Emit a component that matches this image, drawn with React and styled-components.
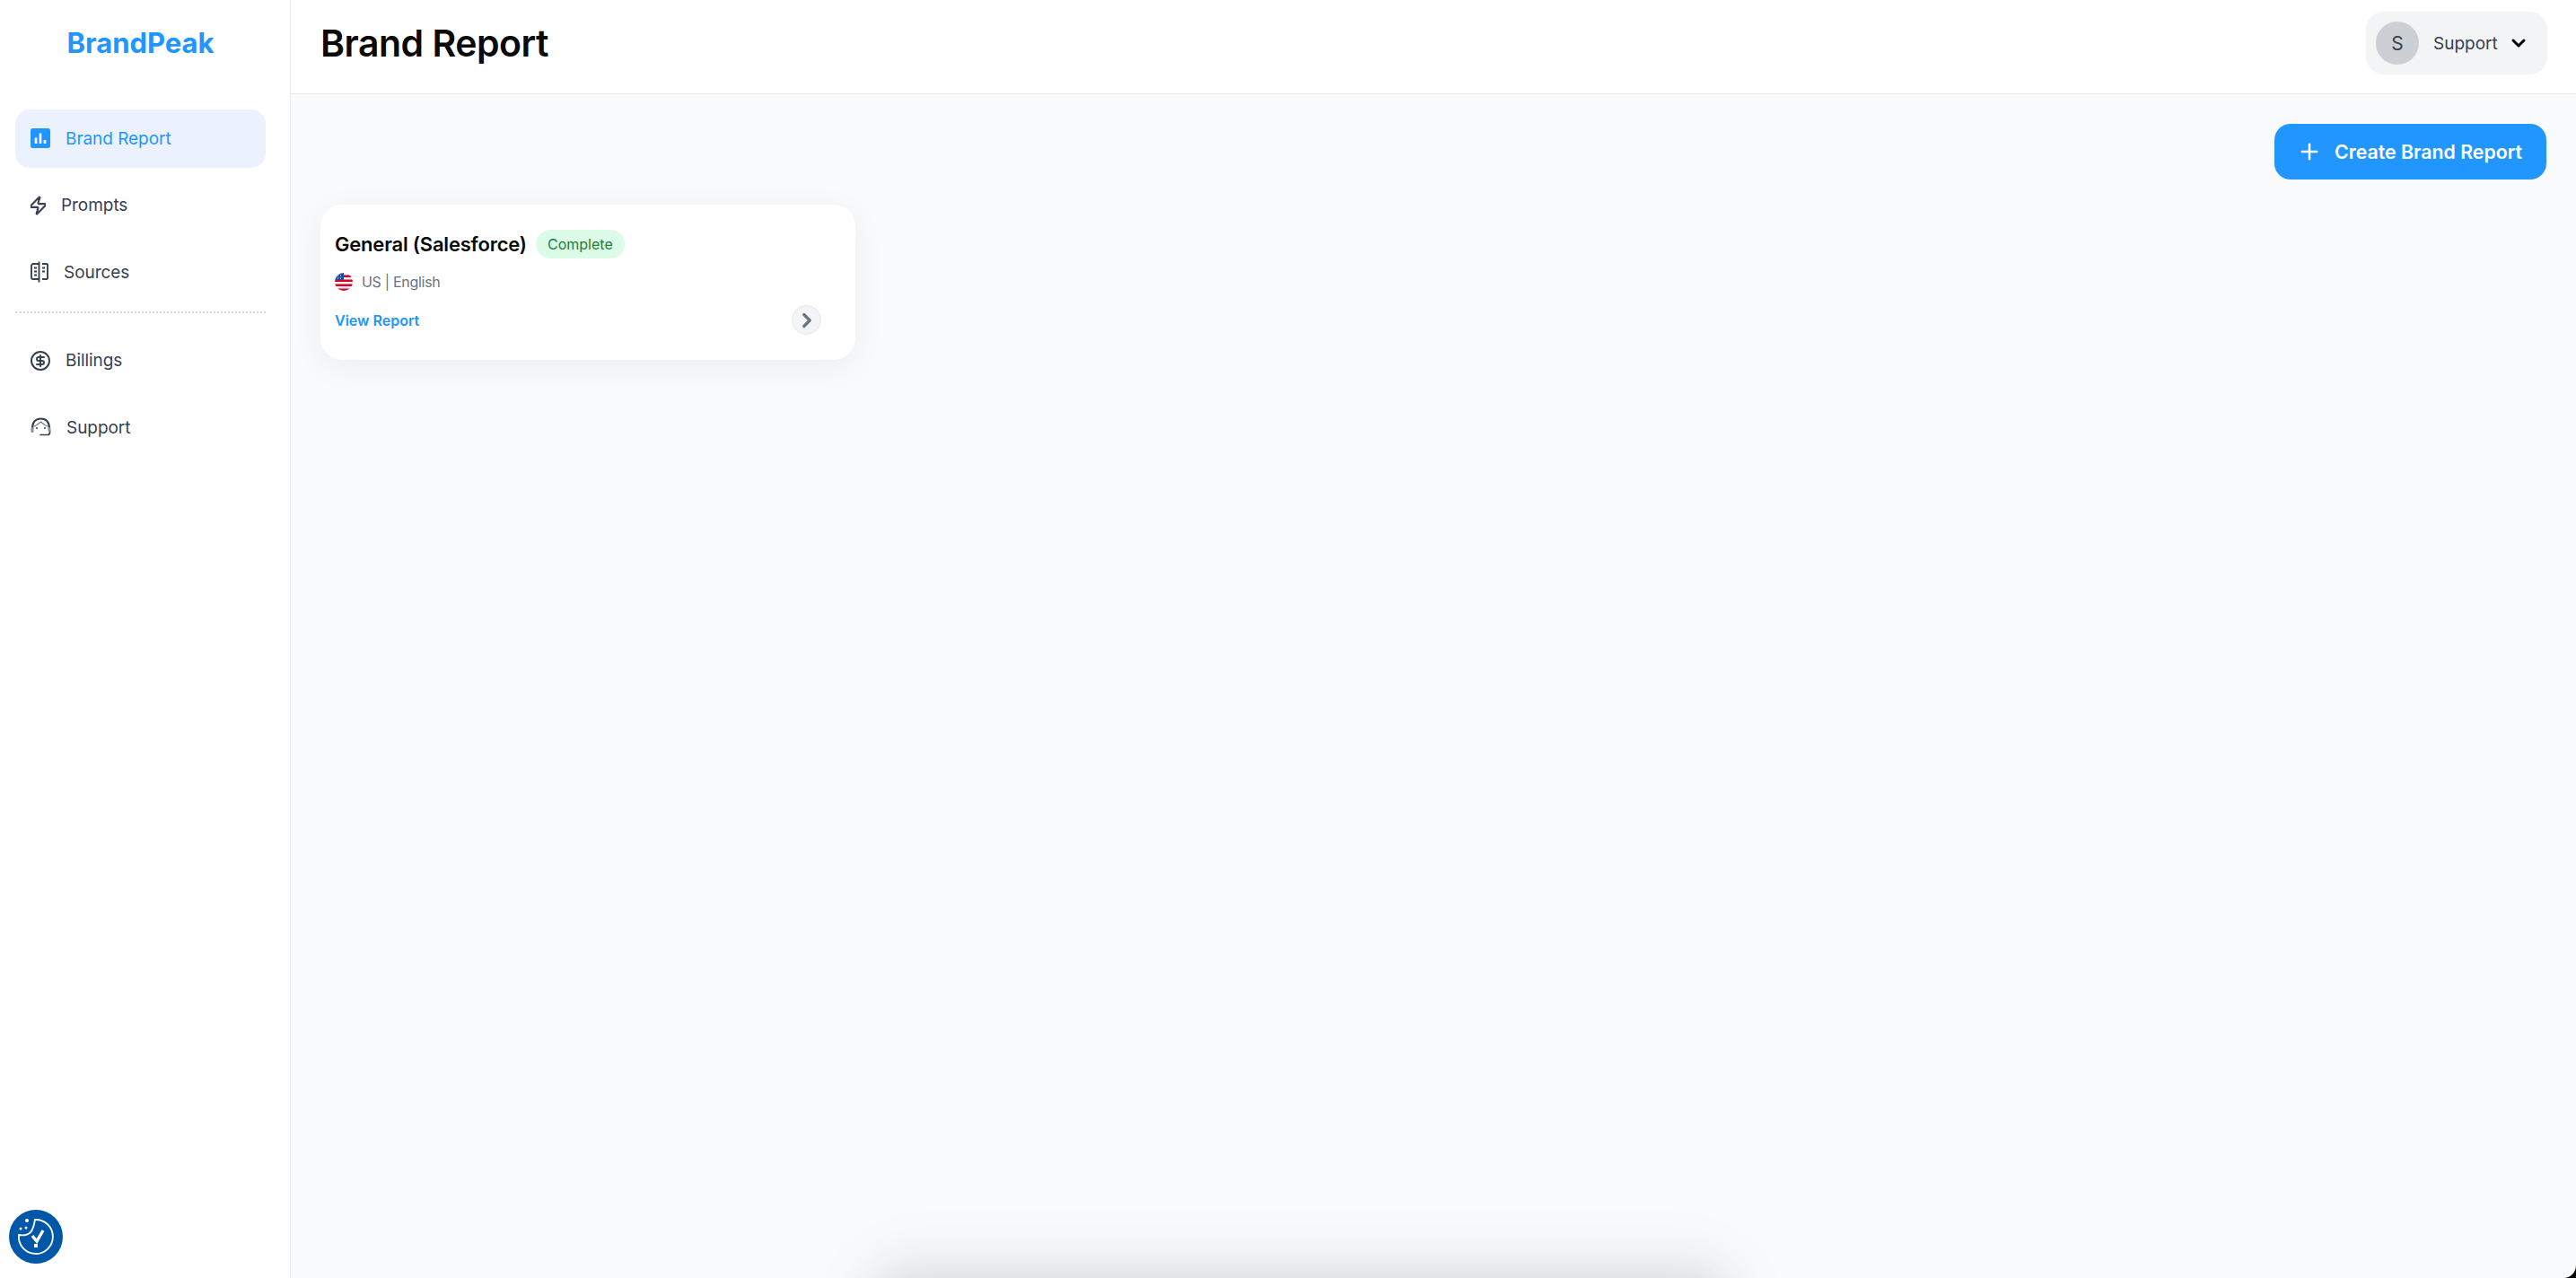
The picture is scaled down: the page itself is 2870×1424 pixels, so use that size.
import React from "react";
import styled, { createGlobalStyle } from "styled-components";
import { ChevronDown, ChevronRight, CircleDollarSign, Plus, Zap } from "lucide-react";

const GlobalStyle = createGlobalStyle`
	html, body {
		margin: 0;
		height: 100%;
		background: #000;
	}
	body {
		font-family: "Inter", "Liberation Sans", sans-serif;
		overflow: hidden;
	}
	#root {
		height: 100%;
	}
	* {
		box-sizing: border-box;
	}
`;

const Page = styled.div`
	height: 100vh;
	display: grid;
	grid-template-columns: 324px 1fr;
	background: #f9fafc;
	border-bottom-right-radius: 14px;
	overflow: hidden;
	position: relative;
`;

const Sidebar = styled.aside`
	background: #fff;
	border-right: 1px solid #e8eaee;
	padding: 0 27px 0 17px;
	display: flex;
	flex-direction: column;
`;

const Logo = styled.div`
	height: 94px;
	margin-bottom: 28px;
	display: flex;
	align-items: center;
	justify-content: center;
	color: #2196ff;
	font-size: 31px;
	font-weight: 700;
`;

const NavGroup = styled.nav`
	display: flex;
	flex-direction: column;
	gap: 10px;
`;

const NavItem = styled.a`
	height: 64.5px;
	padding-left: 17px;
	display: flex;
	align-items: center;
	gap: 17px;
	border-radius: 16px;
	font-size: 19px;
	font-weight: 400;
	letter-spacing: -0.05px;
	color: ${(p) => (p.$active ? "#2196ff" : "#374151")};
	background: ${(p) => (p.$active ? "#ebf2fd" : "transparent")};
`;

const Divider = styled.hr`
	width: 100%;
	margin: 11px 0 21px;
	border: 0;
	border-top: 2px dotted #d1d5db;
`;

const Main = styled.main`
	min-width: 0;
	display: flex;
	flex-direction: column;
	position: relative;
`;

const Header = styled.header`
	height: 105px;
	background: #fff;
	border-bottom: 1px solid #e6e8eb;
	padding: 0 32px 8px 33px;
	display: flex;
	align-items: center;
	justify-content: space-between;
`;

const Title = styled.h1`
	margin: 0;
	font-size: 41px;
	font-weight: 600;
	letter-spacing: -0.5px;
	color: #0a0a0a;
`;

const UserMenu = styled.div`
	width: 202px;
	height: 70px;
	padding: 0 20px 0 11px;
	display: flex;
	align-items: center;
	background: #f3f4f6;
	border-radius: 20px;
	color: #374151;
	font-size: 19px;
	font-weight: 400;
`;

const Avatar = styled.div`
	width: 48px;
	height: 48px;
	margin-right: 16px;
	border-radius: 50%;
	background: #ccd0d5;
	display: flex;
	align-items: center;
	justify-content: center;
	font-size: 21px;
	font-weight: 400;
`;

const UserName = styled.span`
	flex: 1;
`;

const Content = styled.div`
	padding: 33px 33px 0 33px;
	display: flex;
	flex-direction: column;
`;

const CreateButton = styled.button`
	align-self: flex-end;
	width: 303px;
	height: 62px;
	padding-right: 8px;
	border: 0;
	border-radius: 18px;
	background: #2196ff;
	color: #fff;
	display: flex;
	align-items: center;
	justify-content: center;
	gap: 14px;
	font-family: inherit;
	font-size: 21.3px;
	font-weight: 600;
`;

const Card = styled.section`
	width: 596px;
	height: 173px;
	margin-top: 28px;
	padding: 28px 38px 0 16px;
	background: #fff;
	border-radius: 24px;
	box-shadow: 0 8px 36px rgba(17, 24, 39, 0.05);
`;

const CardHead = styled.div`
	display: flex;
	align-items: center;
	gap: 10px;
`;

const CardTitle = styled.h2`
	margin: 0;
	font-size: 22px;
	font-weight: 600;
	letter-spacing: -0.2px;
	color: #0a0a0a;
`;

const Badge = styled.span`
	width: 99px;
	height: 32px;
	border-radius: 16px;
	background: #dcfce7;
	color: #15803d;
	display: flex;
	align-items: center;
	justify-content: center;
	font-size: 16px;
	font-weight: 400;
`;

const Locale = styled.div`
	margin-top: 16px;
	display: flex;
	align-items: center;
	gap: 10px;
	font-size: 16px;
	letter-spacing: -0.3px;
	color: #6b7280;
`;

const CardFoot = styled.div`
	margin-top: 16px;
	display: flex;
	align-items: center;
	justify-content: space-between;
`;

const ViewLink = styled.a`
	color: #2196ff;
	font-size: 16px;
	font-weight: 600;
`;

const RoundButton = styled.button`
	width: 33px;
	height: 33px;
	padding: 0;
	border: 1px solid #e5e7eb;
	border-radius: 50%;
	background: #f3f4f6;
	color: #6b7280;
	display: flex;
	align-items: center;
	justify-content: center;
`;

const CookieBadge = styled.div`
	position: absolute;
	left: 10px;
	bottom: 16px;
	width: 60px;
	height: 60px;
	border-radius: 50%;
	background: #0056a7;
`;

/* the panel sitting just under the fold, only its shadow shows */
const OffscreenPanel = styled.div`
	position: absolute;
	top: 100%;
	left: 655px;
	width: 940px;
	height: 80px;
	border-radius: 40px;
	background: #dfe1e1;
	box-shadow: 0 0 40px 14px rgba(60, 66, 70, 0.11), 0 0 70px 36px rgba(60, 66, 70, 0.03);
`;

const ReportIcon = () => (
	<svg width="22" height="22" viewBox="0 0 22 22">
		<rect width="22" height="22" rx="2.5" fill="#2196ff" />
		<path d="M6 10.5V17M11 5.5V17M16 13V17" stroke="#fff" strokeWidth="2.6" />
	</svg>
);

const SourcesIcon = () => (
	<svg width="20" height="24" viewBox="0 0 20 24" fill="none" stroke="#374151" strokeWidth="1.9" strokeLinejoin="round">
		<path d="M9 3H3a2 2 0 0 0-2 2v13a2 2 0 0 0 2 2h6M13 3h5a1 1 0 0 1 1 1v15a1 1 0 0 1-1 1h-5" />
		<path d="M9.5 0.5V23.5" />
		<path d="M4 7.5H7M4 11.5H7M4 15.5H7M13 7.5H16M13 11.5H16" />
	</svg>
);

const SupportIcon = () => (
	<svg width="23" height="22" viewBox="0 0 23 22" fill="none" stroke="#374151" strokeLinecap="round" strokeLinejoin="round">
		<path d="M2 13C2 5 6 1.5 11.5 1.5S21 5 21 13" strokeWidth="2.2" />
		<path d="M4.5 10C7 8.5 9.5 7 11.5 5 13.5 7 16 8.5 18.5 10" strokeWidth="1.2" stroke="#7b828d" />
		<path d="M21.5 15v2c0 1.5-1 2.5-2.5 2.5H11" strokeWidth="1.7" />
		<rect x="0.5" y="11" width="3" height="6" rx="1.5" fill="#8a919c" stroke="none" />
		<rect x="19.5" y="11" width="3" height="5" rx="1.5" fill="#8a919c" stroke="none" />
		<circle cx="7" cy="12" r="1" fill="#374151" stroke="none" />
		<circle cx="16" cy="12" r="1" fill="#374151" stroke="none" />
	</svg>
);

const FlagIcon = () => (
	<svg width="20" height="20" viewBox="0 0 20 20">
		<defs>
			<clipPath id="flagClip">
				<circle cx="10" cy="10" r="10" />
			</clipPath>
		</defs>
		<g clipPath="url(#flagClip)">
			<rect width="20" height="20" fill="#f0f0f0" />
			<rect y="7.5" width="20" height="2.5" fill="#d80027" />
			<rect y="12.5" width="20" height="2.5" fill="#d80027" />
			<rect y="17.5" width="20" height="2.5" fill="#d80027" />
			<rect y="2.5" x="10" width="10" height="2.5" fill="#d80027" />
			<rect width="10" height="8" fill="#1f4e9e" />
			<path d="M3 3h1M6 3h1M3 6h1M6 6h1" stroke="#fff" strokeWidth="1" />
		</g>
	</svg>
);

const CookieIcon = () => (
	<svg width="60" height="60" viewBox="0 0 60 60" fill="none" stroke="#fff" strokeWidth="1.8">
		<path d="M11 28C16 29 21 28 24 25 27 22 28 17 29 11A19 19 0 1 1 11 28Z" />
		<circle cx="20" cy="12" r="2" fill="#fff" stroke="none" />
		<circle cx="13" cy="21" r="1.5" fill="#fff" stroke="none" />
		<circle cx="19" cy="20" r="1.5" fill="#fff" stroke="none" />
		<path d="M26 29L31 35L38 23" strokeWidth="3.4" />
		<rect x="28" y="38" width="4" height="4" fill="#fff" stroke="none" />
	</svg>
);

const App = () => {
	return (
		<>
			<GlobalStyle />
			<Page>
				<Sidebar>
					<Logo>BrandPeak</Logo>
					<NavGroup>
						<NavItem $active>
							<ReportIcon />
							Brand Report
						</NavItem>
						<NavItem>
							<Zap width={17} height={22} viewBox="3 1 18 22" color="#374151" strokeWidth={2.2} />
							Prompts
						</NavItem>
						<NavItem>
							<SourcesIcon />
							Sources
						</NavItem>
					</NavGroup>
					<Divider />
					<NavGroup>
						<NavItem>
							<CircleDollarSign size={22} viewBox="1 1 22 22" color="#374151" strokeWidth={2} />
							Billings
						</NavItem>
						<NavItem>
							<SupportIcon />
							Support
						</NavItem>
					</NavGroup>
				</Sidebar>
				<Main>
					<Header>
						<Title>Brand Report</Title>
						<UserMenu>
							<Avatar>S</Avatar>
							<UserName>Support</UserName>
							<ChevronDown size={24} color="#000" strokeWidth={3} />
						</UserMenu>
					</Header>
					<Content>
						<CreateButton>
							<Plus size={28} strokeWidth={2.2} />
							Create Brand Report
						</CreateButton>
						<Card>
							<CardHead>
								<CardTitle>General (Salesforce)</CardTitle>
								<Badge>Complete</Badge>
							</CardHead>
							<Locale>
								<FlagIcon />
								US | English
							</Locale>
							<CardFoot>
								<ViewLink>View Report</ViewLink>
								<RoundButton>
									<ChevronRight size={26} strokeWidth={3} />
								</RoundButton>
							</CardFoot>
						</Card>
					</Content>
					<OffscreenPanel />
				</Main>
				<CookieBadge>
					<CookieIcon />
				</CookieBadge>
			</Page>
		</>
	);
};

export default App;
